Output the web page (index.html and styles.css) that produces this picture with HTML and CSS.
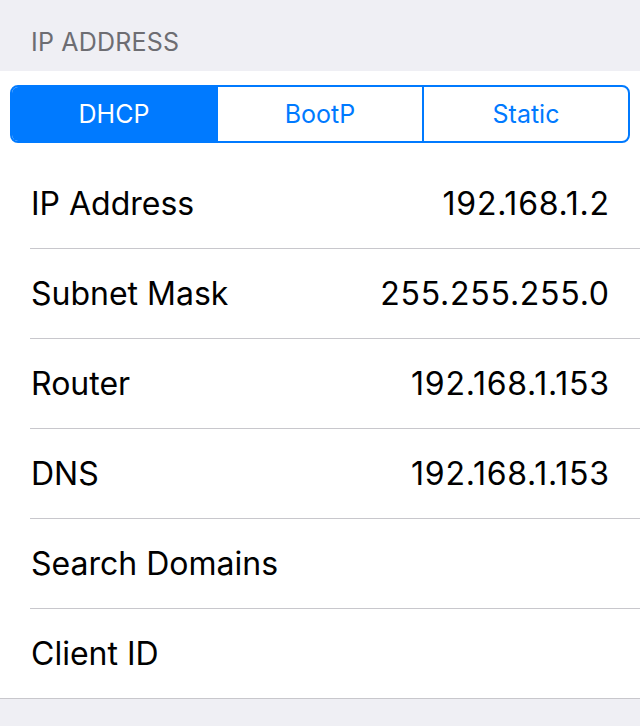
FILE: index.html
```html
<!DOCTYPE html>
<html>
<head>
<meta charset="utf-8">
<link rel="stylesheet" href="styles.css">
</head>
<body>
<div class="section-header">IP ADDRESS</div>
<div class="group">
  <div class="seg-wrap">
    <div class="segmented">
      <div class="seg selected">DHCP</div>
      <div class="seg">BootP</div>
      <div class="seg">Static</div>
    </div>
  </div>
  <div class="row"><div class="row-inner"><span class="label">IP Address</span><span class="value">192.168.1.2</span></div></div>
  <div class="row"><div class="row-inner"><span class="label">Subnet Mask</span><span class="value">255.255.255.0</span></div></div>
  <div class="row"><div class="row-inner"><span class="label">Router</span><span class="value">192.168.1.153</span></div></div>
  <div class="row"><div class="row-inner"><span class="label">DNS</span><span class="value">192.168.1.153</span></div></div>
  <div class="row"><div class="row-inner"><span class="label">Search Domains</span><span class="value"></span></div></div>
  <div class="row last"><div class="row-inner"><span class="label">Client ID</span><span class="value"></span></div></div>
</div>
</body>
</html>
```
FILE: styles.css
```css
html, body {
  margin: 0;
  padding: 0;
  background: #efeff4;
  font-family: Inter, "Liberation Sans", sans-serif;
  -webkit-font-smoothing: antialiased;
}
.section-header {
  height: 71px;
  box-sizing: border-box;
  padding: 27px 0 0 31px;
  font-size: 25px;
  line-height: 30px;
  color: #6d6d72;
  letter-spacing: 0.2px;
}
.group {
  background: #fff;
  border-bottom: 1px solid #c8c7cc;
}
.seg-wrap {
  padding: 14px 10px 16px 10px;
}
.segmented {
  display: flex;
  height: 58px;
  box-sizing: border-box;
  border: 2px solid #007aff;
  border-radius: 8px;
  overflow: hidden;
}
.seg {
  flex: 1;
  display: flex;
  align-items: center;
  justify-content: center;
  color: #007aff;
  font-size: 25px;
  border-left: 2px solid #007aff;
}
.seg:first-child {
  border-left: none;
}
.seg.selected {
  background: #007aff;
  color: #fff;
}
.row {
  padding-left: 30px;
}
.row-inner {
  height: 89px;
  display: flex;
  align-items: center;
  justify-content: space-between;
  padding-right: 31px;
  border-bottom: 1px solid #c8c7cc;
  font-size: 32px;
  color: #000;
}
.row.last .row-inner {
  border-bottom: none;
}
.label {
  padding-left: 1px;
}
.value {
  letter-spacing: 0.75px;
  margin-right: -0.75px;
}
```
